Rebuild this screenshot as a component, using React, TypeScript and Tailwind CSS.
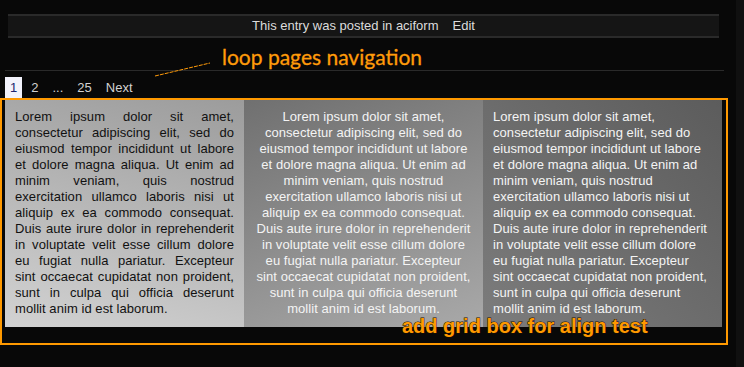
const lorem =
  "Lorem ipsum dolor sit amet, consectetur adipiscing elit, sed do eiusmod tempor incididunt ut labore et dolore magna aliqua. Ut enim ad minim veniam, quis nostrud exercitation ullamco laboris nisi ut aliquip ex ea commodo consequat. Duis aute irure dolor in reprehenderit in voluptate velit esse cillum dolore eu fugiat nulla pariatur. Excepteur sint occaecat cupidatat non proident, sunt in culpa qui officia deserunt mollit anim id est laborum.";

function PostMeta() {
  return (
    <div className="ml-[8px] w-[711px] h-[24px] border-y-2 border-[#2a2a2a] bg-[#151515] flex items-center justify-center gap-[14px] text-[13px] text-[#dcdcdc]">
      <span>This entry was posted in aciform</span>
      <span>Edit</span>
    </div>
  );
}

function Pagination() {
  const pages = ["2", "...", "25", "Next"];
  return (
    <div className="ml-[5px] mt-[6px] flex items-center gap-[4px] h-[21px] text-[13px] text-[#d2d2d2]">
      <span className="h-[21px] px-[5px] flex items-center bg-[#f2f2fb] text-[#1b2470]">1</span>
      {pages.map((p) => (
        <span key={p} className="h-[21px] px-[5px] flex items-center">
          {p}
        </span>
      ))}
    </div>
  );
}

export default function App() {
  return (
    <div className="w-[744px] h-[367px] overflow-hidden bg-[#080808] flex font-['Liberation_Sans',Arial,sans-serif]">
      <div className="relative w-[736px] pt-[14px]">
        <PostMeta />

        {/* annotation: loop pages navigation */}
        <div className="relative h-[32px]">
          <span className="absolute left-[222px] top-[8px] text-[21px] leading-none text-[#ff9b0a] font-['Lato',sans-serif] [-webkit-text-stroke:0.3px_#ff9b0a]">
            loop pages navigation
          </span>
          <svg className="absolute left-[150px] top-[20px]" width="70" height="24" viewBox="0 0 70 24">
            <line x1="5" y1="18" x2="60" y2="5" stroke="#ff9b0a" strokeWidth="1" strokeDasharray="4 1" />
          </svg>
        </div>

        <div className="ml-[5px] w-[719px] border-t border-[#2a2a2a]" />

        <Pagination />

        <div className="relative w-[728px] h-[247px] border-2 border-[#ff9900] pl-[3px]">
          <div className="grid grid-cols-[239px_239px_239px] h-[227px] text-[13px] leading-[16px] tracking-[0.06px]">
            <div className="px-[10px] pt-[9px] text-justify text-[#111] bg-[linear-gradient(195deg,#9c9c9c,#d2d2d2)]">
              {lorem}
            </div>
            <div className="px-[10px] pt-[9px] text-center text-[#f4f4f4] bg-[linear-gradient(160deg,#707070,#a9a9a9)]">
              {lorem}
            </div>
            <div className="px-[10px] pt-[9px] text-left text-[#f4f4f4] bg-[linear-gradient(225deg,#5c5c5c,#7c7c7c)]">
              {lorem}
            </div>
          </div>
          <span className="absolute left-[400px] top-[216px] text-[20px] leading-none font-bold text-[#ff9900] [-webkit-text-stroke:1px_#1a1000] [paint-order:stroke_fill]">
            add grid box for align test
          </span>
        </div>
      </div>
      <div className="w-[8px] h-full bg-[#101010]" />
    </div>
  );
}
